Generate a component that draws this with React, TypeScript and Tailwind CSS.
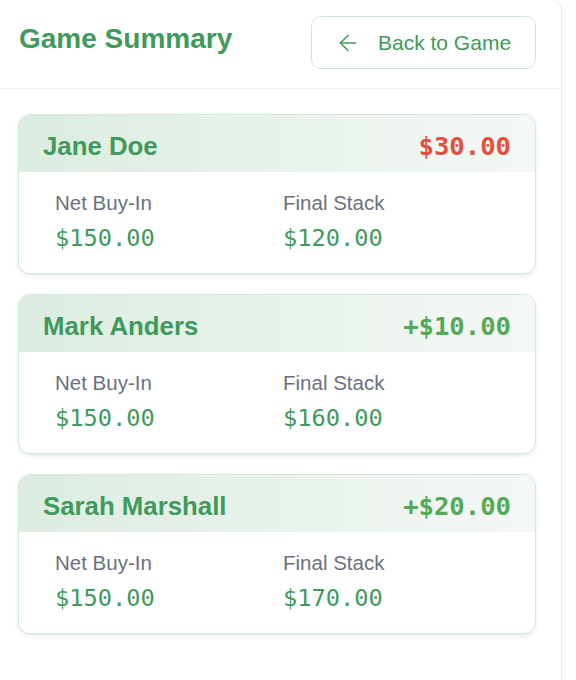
import { ArrowLeft } from "lucide-react"

type Player = {
  name: string
  buyIn: number
  finalStack: number
}

const PLAYERS: Player[] = [
  { name: "Jane Doe", buyIn: 150, finalStack: 120 },
  { name: "Mark Anders", buyIn: 150, finalStack: 160 },
  { name: "Sarah Marshall", buyIn: 150, finalStack: 170 },
]

const money = (n: number) => `$${Math.abs(n).toFixed(2)}`

function PlayerCard({ player }: { player: Player }) {
  const net = player.finalStack - player.buyIn
  const positive = net >= 0

  return (
    <div className="overflow-hidden rounded-[12px] border border-[#d3e8da] bg-white shadow-[0_2px_4px_rgba(60,120,80,0.14)]">
      {/* header */}
      <div className="flex h-[57px] items-center justify-between bg-gradient-to-r from-[#dcece1] to-[#f4f8f5] pl-[24px] pr-[24px] pt-[5px]">
        <span className="text-[25.8px] font-bold text-[#3f9a5c]">{player.name}</span>
        <span
          className={`font-['DejaVu_Sans_Mono',monospace] text-[25.6px] font-bold ${
            positive ? "text-[#54a957]" : "text-[#e0513f]"
          }`}
        >
          {positive ? "+" : ""}
          {money(net)}
        </span>
      </div>

      {/* body */}
      <div className="grid grid-cols-[228px_1fr] pb-[21px] pl-[36px] pt-[18px]">
        <div className="flex flex-col gap-[8px]">
          <span className="text-[20.5px] leading-[26px] text-[#6b7080]">Net Buy-In</span>
          <span className="font-['DejaVu_Sans_Mono',monospace] text-[23.7px] font-medium leading-[28px] text-[#3f9a5c]">
            {money(player.buyIn)}
          </span>
        </div>
        <div className="flex flex-col gap-[8px]">
          <span className="text-[20.5px] leading-[26px] text-[#6b7080]">Final Stack</span>
          <span className="font-['DejaVu_Sans_Mono',monospace] text-[23.7px] font-medium leading-[28px] text-[#3f9a5c]">
            {money(player.finalStack)}
          </span>
        </div>
      </div>
    </div>
  )
}

export default function App() {
  return (
    <div className="flex h-[680px] w-[576px] bg-[#fcfdfc] font-['Liberation_Sans',Arial,sans-serif]">
      <div className="flex h-full w-[562px] flex-col rounded-tr-[10px] border-r border-[#e1eee5] bg-white">
        <div className="flex h-[89px] items-start justify-between border-b border-[#e8f1eb] pl-[19px] pr-[25px] pt-[16px]">
          <h1 className="text-[28px] font-bold leading-[46px] text-[#3f9a5c]">Game Summary</h1>
          <button className="flex h-[53px] w-[225px] items-center gap-[17px] rounded-[10px] border border-[#cfe6d6] bg-white pl-[23px] text-[21px] text-[#3f9a5c]">
            <ArrowLeft className="h-[26px] w-[26px]" strokeWidth={1.4} />
            Back to Game
          </button>
        </div>

        <div className="flex flex-col gap-[20px] pl-[18px] pr-[25px] pt-[25px]">
          {PLAYERS.map((p) => (
            <PlayerCard key={p.name} player={p} />
          ))}
        </div>
      </div>
    </div>
  )
}
